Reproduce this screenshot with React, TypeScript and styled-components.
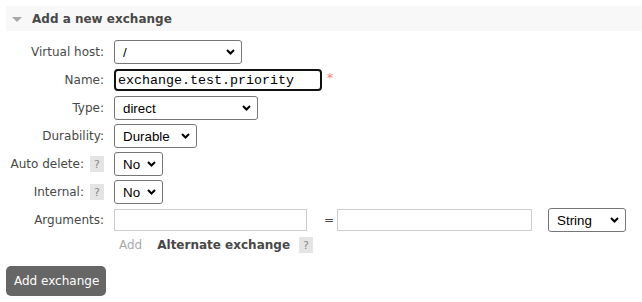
import styled, { createGlobalStyle } from "styled-components";

const GlobalStyle = createGlobalStyle`
  html, body {
    margin: 0;
    padding: 0;
    background: #fff;
  }
  body {
    font: 12px "DejaVu Sans", Verdana, sans-serif;
    color: #484848;
  }
`;

const Page = styled.div`
  padding: 6px 0 0 6px;
`;

const SectionHeader = styled.h2`
  margin: 0;
  height: 25px;
  background: #f8f8f8;
  display: flex;
  align-items: center;
  gap: 10px;
  padding-left: 6px;
  font: 700 12px "DejaVu Sans", Verdana, sans-serif;
  color: #484848;
`;

const Triangle = styled.span`
  width: 0;
  height: 0;
  border-left: 5px solid transparent;
  border-right: 5px solid transparent;
  border-top: 5px solid #a8a8a8;
  margin-top: 1px;
`;

const FormGrid = styled.div`
  display: grid;
  grid-template-columns: 98px auto;
  grid-auto-rows: 28px;
  column-gap: 10px;
  padding-top: 7px;
  align-items: center;
`;

const Label = styled.label`
  display: flex;
  justify-content: flex-end;
  align-items: center;
  gap: 6px;
  color: #484848;
  white-space: nowrap;
`;

const Help = styled.span`
  display: inline-flex;
  align-items: center;
  justify-content: center;
  width: 14px;
  height: 16px;
  background: #e4e4e4;
  color: #888;
  font-size: 11px;
`;

const Cell = styled.div`
  display: flex;
  align-items: center;
`;

const SelectWrap = styled.div<{ $w: number }>`
  position: relative;
  width: ${(p) => p.$w}px;
  height: 24px;
`;

const Select = styled.select`
  appearance: none;
  width: 100%;
  height: 100%;
  box-sizing: border-box;
  border: 1px solid #767676;
  border-radius: 3px;
  background: #fff;
  padding: 0 0 0 8px;
  font: 13.33px "Liberation Sans", Arial, sans-serif;
  color: #000;
  margin: 0;
`;

const Chevron = styled.svg`
  position: absolute;
  right: 7px;
  top: 9px;
  pointer-events: none;
`;

const NameInput = styled.input`
  width: 208px;
  height: 22px;
  box-sizing: border-box;
  border: 2px solid #101010;
  border-radius: 4px;
  padding: 0 2px;
  font: 13.33px "Liberation Mono", "Courier New", monospace;
  color: #000;
  margin: 0;
  outline: none;
`;

const Required = styled.span`
  color: #f77;
  font-size: 12px;
  margin-left: 5px;
  align-self: flex-start;
  margin-top: 2px;
`;

const TextInput = styled.input<{ $w: number }>`
  width: ${(p) => p.$w}px;
  height: 22px;
  box-sizing: border-box;
  border: 1px solid #ccc;
  padding: 0 3px;
  margin: 0;
  font: 12px "DejaVu Sans", Verdana, sans-serif;
`;

const Equals = styled.span`
  margin: 0 3px 0 17px;
  color: #484848;
`;

const ArgsRow = styled(Cell)`
  & > :last-child {
    margin-left: 16px;
  }
`;

const ExtraRow = styled.div`
  grid-column: 2;
  display: flex;
  align-items: center;
  height: 20px;
  padding-left: 5px;
  margin-top: -6px;
`;

const AddLink = styled.span`
  color: #aaa;
  margin-right: 15px;
`;

const Strong = styled.span`
  font-weight: 700;
  color: #484848;
  margin-right: 9px;
`;

const Button = styled.button`
  margin-top: 4px;
  height: 30px;
  padding: 0 7px 0 8px;
  background: #666;
  color: #fff;
  border: none;
  border-radius: 5px;
  font: 12px "DejaVu Sans", Verdana, sans-serif;
`;

const ChevronIcon = () => (
  <Chevron width="9" height="6" viewBox="0 0 9 6">
    <path d="M1 1l3.5 3.5L8 1" fill="none" stroke="#000" strokeWidth="2" />
  </Chevron>
);

const Dropdown = ({ w, value }: { w: number; value: string }) => (
  <SelectWrap $w={w}>
    <Select defaultValue={value}>
      <option>{value}</option>
    </Select>
    <ChevronIcon />
  </SelectWrap>
);

export default function App() {
  return (
    <>
      <GlobalStyle />
      <Page>
        <SectionHeader>
          <Triangle />
          Add a new exchange
        </SectionHeader>
        <FormGrid>
          <Label>Virtual host:</Label>
          <Cell>
            <Dropdown w={128} value="/" />
          </Cell>

          <Label>Name:</Label>
          <Cell>
            <NameInput defaultValue="exchange.test.priority" />
            <Required>*</Required>
          </Cell>

          <Label>Type:</Label>
          <Cell>
            <Dropdown w={144} value="direct" />
          </Cell>

          <Label>Durability:</Label>
          <Cell>
            <Dropdown w={83} value="Durable" />
          </Cell>

          <Label>
            Auto delete: <Help>?</Help>
          </Label>
          <Cell>
            <Dropdown w={49} value="No" />
          </Cell>

          <Label>
            Internal: <Help>?</Help>
          </Label>
          <Cell>
            <Dropdown w={49} value="No" />
          </Cell>

          <Label>Arguments:</Label>
          <ArgsRow>
            <TextInput $w={193} />
            <Equals>=</Equals>
            <TextInput $w={195} />
            <Dropdown w={78} value="String" />
          </ArgsRow>

          <ExtraRow>
            <AddLink>Add</AddLink>
            <Strong>Alternate exchange</Strong>
            <Help>?</Help>
          </ExtraRow>
        </FormGrid>
        <Button>Add exchange</Button>
      </Page>
    </>
  );
}
